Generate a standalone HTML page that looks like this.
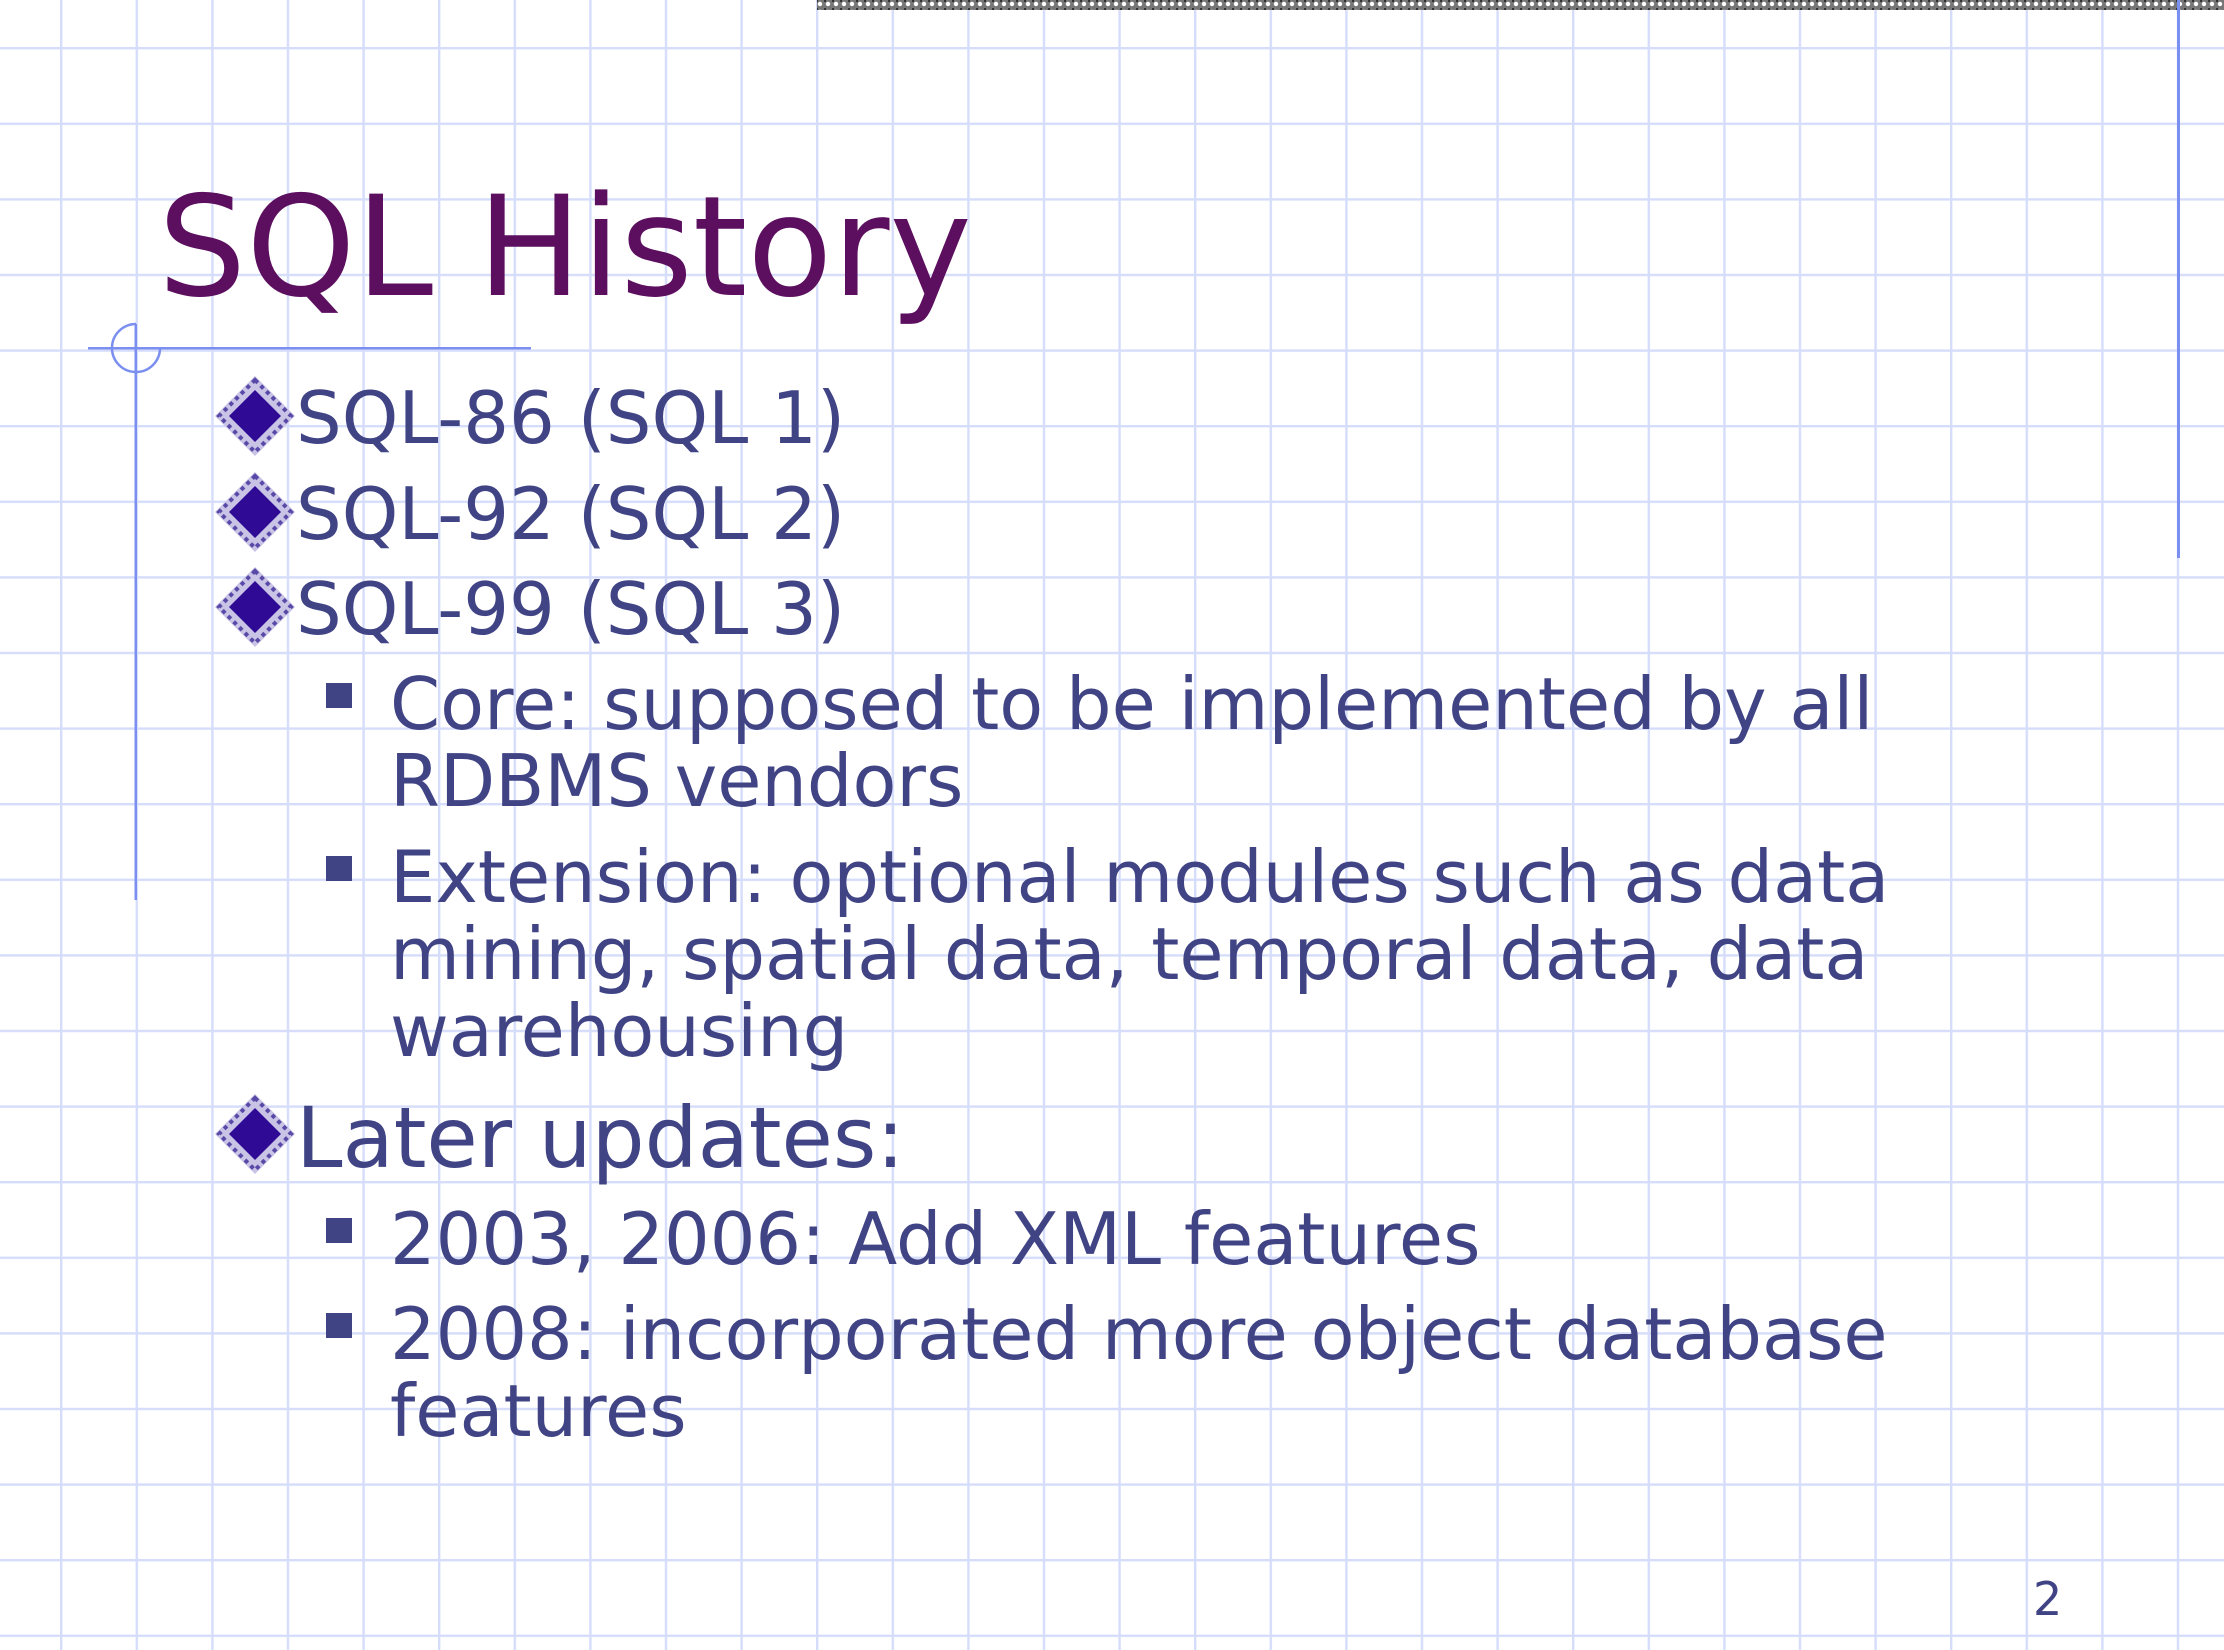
<!DOCTYPE html>
<html><head><meta charset="utf-8"><style>
html,body{margin:0;padding:0;background:#fff;}
svg{display:block;}
text{font-family:"DejaVu Sans","Liberation Sans",sans-serif;}
</style></head><body>
<svg width="2224" height="1650" viewBox="0 0 2224 1650" xmlns="http://www.w3.org/2000/svg">
<defs>
<pattern id="grid" x="60" y="47" width="75.6" height="75.6" patternUnits="userSpaceOnUse">
<rect x="0" y="0" width="2.4" height="75.6" fill="#d6ddfb"/>
<rect x="0" y="0" width="75.6" height="2.4" fill="#d6ddfb"/>
</pattern>
<pattern id="hatch" x="0" y="0" width="8" height="8" patternUnits="userSpaceOnUse">
<rect width="8" height="8" fill="#777"/>
<circle cx="4" cy="4" r="2.2" fill="#fff"/>
<rect x="0" y="0" width="2" height="2" fill="#333"/>
</pattern>
<g id="dia">
<polygon points="0,-40 40,0 0,40 -40,0" fill="#c9c3e6"/>
<polygon points="0,-36 36,0 0,36 -36,0" fill="none" stroke="#5a4aa8" stroke-width="4" stroke-dasharray="4 4"/>
<polygon points="0,-26 26,0 0,26 -26,0" fill="#2f0a94"/>
</g>
</defs>
<rect width="2224" height="1650" fill="url(#grid)"/>
<rect x="817" y="0" width="1407" height="10" fill="url(#hatch)"/>
<rect x="2177" y="0" width="3" height="558" fill="#7a8ff0"/>
<rect x="88" y="347" width="443" height="2.5" fill="#7a8ff0"/>
<rect x="134.5" y="324" width="2.5" height="576" fill="#7a8ff0"/>
<path d="M136 324 A24 24 0 1 0 160 348" fill="none" stroke="#7a8ff0" stroke-width="2.5"/>
<text x="158" y="295" font-size="139" fill="#5c0f5f">SQL History</text>
<g fill="#404485">
<use href="#dia" x="255" y="416"/>
<text x="296" y="443" font-size="72">SQL-86 (SQL 1)</text>
<use href="#dia" x="255" y="512"/>
<text x="296" y="539" font-size="72">SQL-92 (SQL 2)</text>
<use href="#dia" x="255" y="607"/>
<text x="296" y="634" font-size="72">SQL-99 (SQL 3)</text>
<rect x="326" y="683" width="26" height="25"/>
<text x="390" y="729" font-size="71.8">Core: supposed to be implemented by all</text>
<text x="390" y="806" font-size="71.8">RDBMS vendors</text>
<rect x="326" y="856" width="26" height="25"/>
<text x="390" y="902" font-size="71.8">Extension: optional modules such as data</text>
<text x="390" y="979" font-size="71.8">mining, spatial data, temporal data, data</text>
<text x="390" y="1056" font-size="71.8">warehousing</text>
<use href="#dia" x="255" y="1134"/>
<text x="296" y="1167" font-size="83.5">Later updates:</text>
<rect x="326" y="1218" width="26" height="25"/>
<text x="390" y="1264" font-size="71.8">2003, 2006: Add XML features</text>
<rect x="326" y="1313" width="26" height="25"/>
<text x="390" y="1359" font-size="71.8">2008: incorporated more object database</text>
<text x="390" y="1436" font-size="71.8">features</text>
<text x="2033" y="1615" font-size="46">2</text>
</g>
</svg>
</body></html>
